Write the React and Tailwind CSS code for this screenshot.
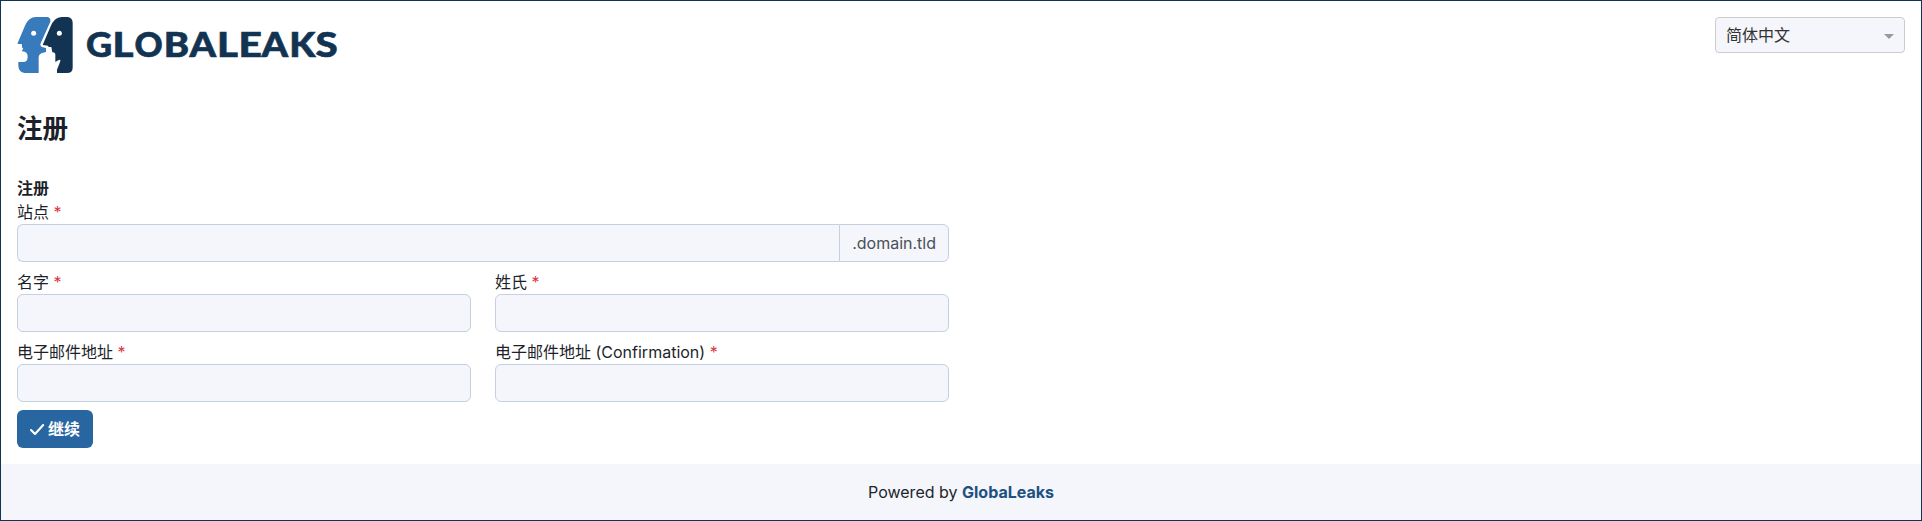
import React from "react";

// glyph, left edge of the advance box, advance width
const LETTERS = [
  ["G", 86, 26.2],
  ["L", 112.4, 21],
  ["O", 134.4, 28.2],
  ["B", 163.8, 25.4],
  ["A", 189.6, 26.6],
  ["L", 217, 21],
  ["E", 238.6, 23.4],
  ["A", 261.6, 26.6],
  ["K", 289.2, 26.2],
  ["S", 315.6, 22.2],
];

function Logo() {
  return (
    <svg width="324" height="56" viewBox="17 17 324 56" className="block" role="img">
      <g transform="scale(0.33333)">
        <path fill="#377bbc" d="M108 51H143Q153 53 151 65L122 130Q119 138 126 141L138 144V156L126 159Q117 162 116 172V219H74Q56 216 55 197V186H72Q83 184 83 170Q83 155 67 154L66 150L70 147L66 142V133L52 131L75 77Q86 51 108 51Z" />
        <path fill="#133353" d="M185 51H202Q218 53 218 68V203Q218 219 201 219H171V209L181 184Q182 178 176 180L166 186V162Q163 155 157 157L154 141H146L144 137L128 135L151 81Q163 51 185 51Z" />
        <circle cx="101" cy="100" r="7.5" fill="#fff" />
        <circle cx="178" cy="100" r="7.5" fill="#fff" />
      </g>
      <g className="fill-[#133353] stroke-[#133353] stroke-[0.6px] font-['Lato',sans-serif] text-[33.4px] font-black">
        {LETTERS.map(([ch, x, w]) => (
          <text key={x} x={x} y="56.9" textLength={w} lengthAdjust="spacingAndGlyphs">
            {ch}
          </text>
        ))}
      </g>
    </svg>
  );
}

function Label({ children }) {
  return (
    <label className="block h-6 leading-6">
      {children} <span className="text-[#dc3545]">*</span>
    </label>
  );
}

const box = "block h-[38px] w-full rounded-md border border-[#c5d0e0] bg-[#f4f6fb] px-3 outline-none";

function Field({ label }) {
  return (
    <div>
      <Label>{label}</Label>
      <input className={box} />
    </div>
  );
}

export default function App() {
  return (
    <div className="flex h-[521px] flex-col border border-[#133353] bg-white font-['Inter','Noto_Sans_CJK_SC',sans-serif] text-base text-[#212529]">
      <header className="flex h-[72px] items-start justify-between px-4 pt-4">
        <Logo />
        <div className="flex h-9 w-[190px] items-center justify-between rounded border border-[#cccccc] bg-[#f4f6fb] pr-[10px] pl-[10px] text-[#333]">
          <span>简体中文</span>
          <span className="mt-0.5 border-x-5 border-t-5 border-x-transparent border-t-[#999999]" />
        </div>
      </header>
      <main className="h-[391px] px-4 text-[#1d1f2a]">
        <h1 className="pt-[41px] text-[25.6px] leading-[30px] font-bold">注册</h1>
        <form className="mt-8 w-[932px]">
          <div className="h-6 leading-6 font-bold">注册</div>
          <Label>站点</Label>
          <div className="flex">
            <input className="h-[38px] min-w-0 flex-1 rounded-l-md border border-r-0 border-[#c5d0e0] bg-[#f4f6fb] px-3 outline-none" />
            <span className="flex h-[38px] items-center rounded-r-md border border-[#c5d0e0] bg-[#f4f6fb] px-3 text-[#495057]">.domain.tld</span>
          </div>
          <div className="mt-2 grid grid-cols-2 gap-x-6 gap-y-2">
            <Field label="名字" />
            <Field label="姓氏" />
            <Field label="电子邮件地址" />
            <Field label="电子邮件地址 (Confirmation)" />
          </div>
          <button type="button" className="mt-2 flex h-[38px] items-center gap-[3px] rounded-md bg-[#2866a2] pr-[13px] pl-3 font-bold text-white">
            <svg width="16" height="16" viewBox="0 0 16 16" fill="none" stroke="currentColor" strokeWidth="2.1" strokeLinecap="round" strokeLinejoin="round">
              <path d="M2 9L6 13L14.2 4" />
            </svg>
            <span>继续</span>
          </button>
        </form>
      </main>
      <footer className="flex flex-1 items-center justify-center bg-[#f4f6fb]">
        <span>
          Powered by <a className="font-bold text-[#205081]">GlobaLeaks</a>
        </span>
      </footer>
    </div>
  );
}
